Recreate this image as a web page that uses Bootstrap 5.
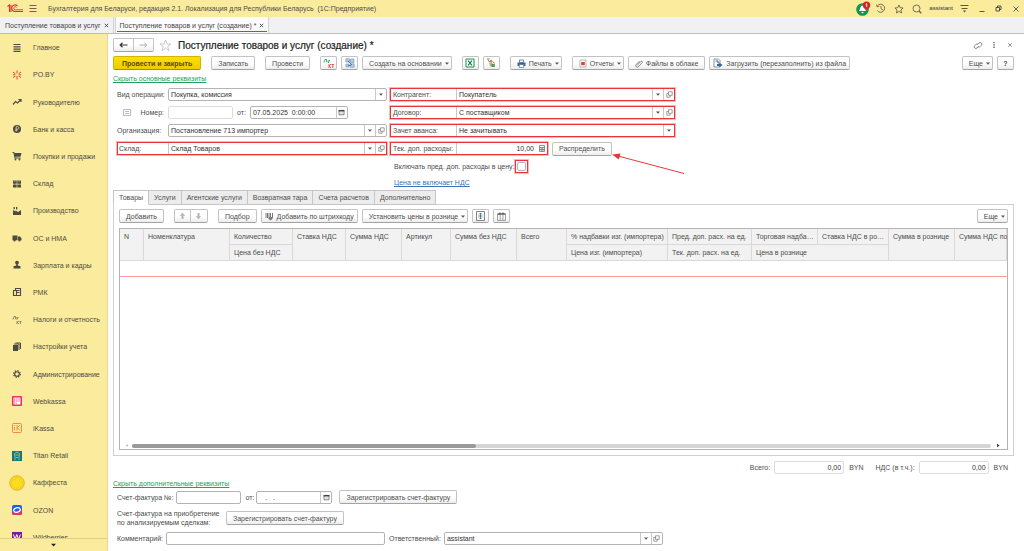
<!DOCTYPE html>
<html lang="ru">
<head>
<meta charset="utf-8">
<meta name="viewport" content="width=device-width, initial-scale=1">
<title>Поступление товаров и услуг (создание) *</title>
<link rel="stylesheet" href="https://cdn.jsdelivr.net/npm/bootstrap@5.3.0/dist/css/bootstrap.min.css">
<style>
:root{--line:#b4b4b4;--soft:#dcdcdc;--yellow:#faeb9d;--mark:#e9353a}
body{font-family:"Liberation Sans",Arial,sans-serif;font-size:7px;line-height:9px;color:#4c4c4c;background:#fff}
svg{display:block;flex:none}
button,input,select{font:inherit;color:inherit}
button{padding:0;border:0;background:none}
.app-bar{height:17px;background:var(--yellow);padding:0 4px 0 7px}
.g7{margin-left:7px}
.g10{margin-left:10px}
.app-tabs{height:17px;background:#f1f1f1;border-bottom:1px solid #bdbdbd}
.app-tab{padding:0 4px 0 5px;border-right:1px solid #d2d2d2;gap:3px;color:#444}
.app-tab a,.side a{color:inherit;text-decoration:none}
.app-tab.current{background:#fbfbfb;position:relative;border-left:1px solid #d2d2d2;margin-left:1px;padding-left:4px}
.app-tab.current::after{content:"";position:absolute;left:1px;right:1px;bottom:1px;height:1px;background:#0b9a4c}
.user{font-size:6px;color:#333}
.side{width:108px;background:var(--yellow);border-right:1px solid #e5d88f;color:#4f4b3e}
.side-list{display:grid;grid-auto-rows:5.4%;overflow:hidden;min-height:0}
.side-list a{display:flex;align-items:center}
.side-list svg{margin:0 8px 0 9px}
.side-more{height:13px;border-top:1px solid #ddd08a}
.work{padding:4px 10px 6px 5px}
.doc-title{font-size:10px;line-height:13px;font-weight:400;color:#222;margin:0 0 0 6px;-webkit-text-stroke:.2px #222}
.doc-star{margin-left:5px}
.cmd{height:14px;border:1px solid #c3c3c3;border-bottom-color:#a3a3a3;border-radius:2px;background:linear-gradient(#fff 50%,#ededed);display:inline-flex;align-items:center;justify-content:center;gap:3px;padding:0 6px;white-space:nowrap;flex:none}
.cmd-main{background:linear-gradient(#fce000,#efcb00);border-color:#d3b400;border-bottom-color:#a89000;font-weight:700;color:#564b10;padding:0 8px}
.cmd-drop{padding-right:2px}
.cmd-pic{padding:0 3px}
.w-ico{width:17px;padding:0}
.fold{color:#1fa05c;text-decoration:underline}
.fold-top{margin:4px 0 5px}
.box{height:13px;border:1px solid var(--line);border-radius:2px;background:#fff;min-width:0}
.box.pale{border-color:var(--soft)}
.box input,.box select{border:0;padding:0 2px;background:none;min-width:0;width:100%;outline:0;appearance:none;color:#333}
.box button,.box .drop{width:11px;flex:none;border-left:1px solid #c9c9c9;display:flex;align-items:center;justify-content:center}
.marked{border:1px solid var(--mark);box-shadow:0 0 0 1px rgba(233,53,58,.35);height:13px}
.marked .box{border:0;border-left:1px solid #c9c9c9;border-radius:0;height:auto;align-self:stretch}
.form-top{gap:3px}
.col-l{width:274px;gap:5px}
.col-r{width:285px;gap:5px}
.lab-l{width:55px;flex:none;padding-left:4px;white-space:nowrap}
.lab-r{width:65px;flex:none;padding-left:2px;white-space:nowrap}
.marked-l{margin-left:4px}
.marked-l .lab-l{padding-left:1px;width:50px}
.frow{height:13px}
.num-lab{width:37px}
.num-box{width:65px}
.date-box{width:98px}
.date-box input,.sfd-box input{white-space:pre}
.cost{width:158px}
.tick-mark{width:13px;padding:1px}
.tick{appearance:none;width:9px;height:9px;border:1px solid #b4b4b4;border-radius:2px;margin:0;display:block}
.price-link{color:#3b73b3}
.pointer{position:absolute;left:218px;top:63px}
.book{margin-top:3px}
.book-tabs button{height:15px;padding:0 5px;border:1px solid #c6c6c6;border-left-width:0;background:#ececec}
.book-tabs button:first-child{border-left-width:1px}
.book-tabs .on{background:#fff;border-bottom-color:#fff}
.pane{border:1px solid #d0d0d0;margin-top:-1px;padding:4px 5px 5px;min-height:0}
.sheet{border:1px solid var(--line);margin-top:5px;min-height:0;overflow:hidden}
.sheet table{table-layout:fixed;width:100%;border-collapse:separate;border-spacing:0}
.sheet th{font-weight:400;background:#f2f2f2;border-right:1px solid #d9d9d9;border-bottom:1px solid #d9d9d9;padding:3px 0 3px 4px;height:16px;vertical-align:top;white-space:nowrap}
.sheet td{height:16px;padding:0;border-bottom:1px solid #ff9d9d}
.track{height:4px;background:#d6d6d6;border-radius:2px}
.thumb{width:40%;height:4px;background:#999;border-radius:2px}
.total{width:70px}
.total input{text-align:right}
.totals{margin:5px 0}
.cur{margin-left:5px}
.cur.last{margin-right:6px}
.vat{margin-left:12px}
.foot{padding-left:4px;gap:5px;margin-top:2px}
.sf-lab{padding-right:2px}
.sf-box{width:65px}
.sfd-lab{padding:0 2px 0 5px}
.sfd-box{width:76px}
.two{width:109px}
.cm-lab{width:49px}
.cm-box{width:219px}
.rs-lab{padding:0 3px 0 4px}
.rs-box{width:219px}
</style>
</head>
<body class="vh-100 d-flex flex-column overflow-hidden">
<svg width="0" height="0" class="position-absolute">
 <symbol id="caret" viewBox="0 0 4 3"><path d="M0 .5h4L2 2.7z" fill="#555"/></symbol>
 <symbol id="open" viewBox="0 0 7 7"><path d="M2.5.8h3.700v3.500H2.500zM2.500 2.500H.8v3.700h3.400V4.300" fill="none" stroke="#777" stroke-width=".7"/></symbol>
 <symbol id="cal" viewBox="0 0 7 7"><path d="M1 1.400h5v4.400H1z" fill="#fff" stroke="#666" stroke-width=".8"/><path d="M.6 1h5.800v1.500H.6z" fill="#444"/><path d="M2 4h3" stroke="#999" stroke-width=".6"/></symbol>
 <symbol id="close" viewBox="0 0 6 6"><path d="M1 1l4 4M5 1L1 5" stroke="#444" stroke-width="1.100"/></symbol>
</svg>

<header class="app-bar d-flex align-items-center">
 <svg width="17" height="9" viewBox="0 0 17 9" fill="none" stroke="#d9352b" stroke-width="1.100"><path d="M.5 2.500L2.500 1v7M4 1v7"/><path d="M10.500 2A3.300 3.300 0 1 0 8.500 7.500H16"/><path d="M9.500 3.500A1.500 1.500 0 1 0 8.500 5.800H16" stroke-width=".9"/></svg>
 <button class="ms-1" aria-label="Меню"><svg width="10" height="9" viewBox="0 0 10 9"><path d="M1.500 1.500h7M1.500 4.500h7M1.500 7.500h7" stroke="#6d6646"/></svg></button>
 <span class="g10 text-nowrap">Бухгалтерия для Беларуси, редакция 2.1. Локализация для Республики Беларусь&nbsp; (1С:Предприятие)</span>
 <div class="ms-auto d-flex align-items-center">
  <button aria-label="Уведомления"><svg width="16" height="16" viewBox="0 0 16 16"><circle cx="7.500" cy="8.500" r="6.300" fill="#0f9650"/><path d="M7.500 4.500c2 0 2 3 3.500 5.500H4c1.500-2.500 1.500-5.500 3.500-5.500zM6 11h3l-1.500 1.500z" fill="#fff"/><circle cx="11.500" cy="4.300" r="3.700" fill="#e0221e"/><path d="M10.700 3.300l1-.8v3.500" stroke="#fff" stroke-width=".9" fill="none"/></svg></button>
  <button class="ms-1" aria-label="История"><svg width="12" height="11" viewBox="0 0 12 11" fill="none" stroke="#6a6347" stroke-width=".9"><path d="M2.300 3A4 4 0 1 1 2.300 7.500M1.500 1.500l.6 2.200 2.200-.4M6 3v2.700L8 7"/></svg></button>
  <button class="g7" aria-label="Избранное"><svg width="10" height="10" viewBox="0 0 10 10"><path d="M5 1l1.200 2.700 2.900.3-2.200 2 .7 3L5 7.400 2.400 9l.7-3L.9 4l2.900-.3z" fill="none" stroke="#6a6347" stroke-width=".9"/></svg></button>
  <button class="ms-2" aria-label="Поиск"><svg width="10" height="10" viewBox="0 0 10 10" fill="none" stroke="#6a6347"><circle cx="4.500" cy="4.500" r="3.500" stroke-width=".9"/><path d="M7 7l2.300 2.300" stroke-width="1.300"/></svg></button>
  <span class="g7 user">assistant</span>
  <button class="g7" aria-label="Настройки"><svg width="9" height="9" viewBox="0 0 9 9"><path d="M.5 1.500h8M1.500 4.500h6" stroke="#5d573f"/><path d="M2.800 6.500h3.400L4.500 8.500z" fill="#5d573f"/></svg></button>
  <button class="g10" aria-label="Свернуть"><svg width="6" height="8" viewBox="0 0 6 8"><path d="M.5 6.500h5" stroke="#555"/></svg></button>
  <button class="g10" aria-label="Развернуть"><svg width="7" height="7" viewBox="0 0 7 7" fill="none" stroke="#444" stroke-width=".9"><path d="M1 2.500h3.500V6H1zM2.500 2.500V1H6v3.500H4.500"/></svg></button>
  <button class="g10" aria-label="Закрыть"><svg width="8" height="8" viewBox="0 0 8 8"><path d="M1.500 1.500l5 5M6.500 1.500l-5 5" stroke="#555" stroke-width=".9"/></svg></button>
 </div>
</header>

<nav class="app-tabs d-flex">
 <div class="app-tab d-flex align-items-center"><a href="#">Поступление товаров и услуг</a><button aria-label="Закрыть вкладку"><svg width="5" height="5"><use href="#close"/></svg></button></div>
 <div class="app-tab current d-flex align-items-center"><a href="#">Поступление товаров и услуг (создание) *</a><button aria-label="Закрыть вкладку"><svg width="5" height="5"><use href="#close"/></svg></button></div>
</nav>

<div class="d-flex flex-grow-1 overflow-hidden">
<aside class="side d-flex flex-column flex-shrink-0">
 <nav class="side-list flex-grow-1">
  <a href="#"><svg width="16" height="16" viewBox="0 0 16 16"><path d="M4.500 4.500h7M4.500 6.800h7M4.500 9.100h7M4.500 11.400h7" stroke="#4b4a45" stroke-width="1.200"/></svg>Главное</a>
  <a href="#"><svg width="16" height="16" viewBox="0 0 16 16"><path d="M8 3.500v3M8 9v3.500M4 5l2.500 2M12 5L9.500 7M4 10.500l2.500-1.500M12 10.500L9.500 9M4 7.800h2M10 7.800h2" stroke="#ee4136"/></svg>PO.BY</a>
  <a href="#"><svg width="16" height="16" viewBox="0 0 16 16"><path d="M4 10.500L6.500 7.500l2 1.500L12 5.500M9.500 5.500h2.500V8" fill="none" stroke="#4b4a45" stroke-width="1.200"/></svg>Руководителю</a>
  <a href="#"><svg width="16" height="16" viewBox="0 0 16 16"><circle cx="8" cy="8" r="4" fill="#4b4a45"/><path d="M7.200 10.500v-5h1.300a1.300 1.300 0 0 1 0 2.700H6.300M6.300 9.300h2.200" fill="none" stroke="#f5e79c" stroke-width=".7"/></svg>Банк и касса</a>
  <a href="#"><svg width="16" height="16" viewBox="0 0 16 16"><path d="M3.500 4H5.200l.3 1H12.500l-1 3.700H6.200l.2.800H11.500v.9H5.500L4.500 4.900h-1z" fill="#4b4a45"/><circle cx="6.500" cy="11.500" r=".9" fill="#4b4a45"/><circle cx="10.500" cy="11.500" r=".9" fill="#4b4a45"/></svg>Покупки и продажи</a>
  <a href="#"><svg width="16" height="16" viewBox="0 0 16 16"><path d="M4 4.500h3.700v3.300H4zM8.300 4.500H12v3.300H8.300zM4 8.400h3.700v3.100H4zM8.300 8.400H12v3.100H8.300z" fill="#4b4a45"/><path d="M5.800 4.500v1.500M10.200 4.500v1.500" stroke="#f5e79c" stroke-width=".6"/></svg>Склад</a>
  <a href="#"><svg width="16" height="16" viewBox="0 0 16 16"><path d="M4 12V7l2.500 1.500V7.500L9 9l3-2v5zM4.500 4h1.300v2.300H4.500zM7 4h1.300v2.500H7z" fill="#4b4a45"/></svg>Производство</a>
  <a href="#"><svg width="16" height="16" viewBox="0 0 16 16"><path d="M3.500 5.500h5v4.700h-5zM9 6.500h2l1.500 1.800v1.900H9z" fill="#4b4a45"/><circle cx="5.500" cy="10.500" r="1.100" fill="#4b4a45"/><circle cx="10.500" cy="10.500" r="1.100" fill="#4b4a45"/></svg>ОС и НМА</a>
  <a href="#"><svg width="16" height="16" viewBox="0 0 16 16"><circle cx="8" cy="5.600" r="1.900" fill="#4b4a45"/><path d="M7.200 7h1.600v1.500l2.700.8V11.500h-7V9.300l2.700-.8z" fill="#4b4a45"/></svg>Зарплата и кадры</a>
  <a href="#"><svg width="16" height="16" viewBox="0 0 16 16"><path d="M4.500 6.500h3v5h-3zM6.500 6V4.500h5v7H8" fill="none" stroke="#4b4a45" stroke-width="1.100"/><path d="M8 6.500h2.500M8 8.500h2.500" stroke="#4b4a45"/></svg>РМК</a>
  <a href="#"><svg width="16" height="16" viewBox="0 0 16 16" fill="none" stroke="#77715a" stroke-width=".8"><path d="M4 7.500V6.500h.5L5 4.500h1.500v2h.6v1M7.500 5l1 1.300L9.500 5M8.800 6L8 7.500M8 9v3M10 9L8.300 10.400 10 12M10.500 9.500h2M11.500 9.500V12"/></svg>Налоги и отчетность</a>
  <a href="#"><svg width="16" height="16" viewBox="0 0 16 16"><path d="M4 6h5v6H4z" fill="#4b4a45"/><path d="M5 5h5v6M6.500 4h5v6" fill="none" stroke="#4b4a45"/></svg>Настройки учета</a>
  <a href="#"><svg width="16" height="16" viewBox="0 0 16 16" fill="none" stroke="#4b4a45"><circle cx="8" cy="8" r="2.300" stroke-width="1.100"/><circle cx="8" cy="8" r="3.300" stroke-dasharray="1.300 1.290" stroke-width="1.300"/></svg>Администрирование</a>
  <a href="#"><svg width="16" height="16" viewBox="0 0 16 16"><rect x="3" y="3" width="10" height="10" rx="1" fill="#ee2a63"/><path d="M4.500 4.500h7v7h-7z" fill="#fff"/><path d="M5 6h6M5 8h6M5 10h3" stroke="#ee2a63" stroke-width=".8" stroke-dasharray="1.200 .5"/></svg>Webkassa</a>
  <a href="#"><svg width="16" height="16" viewBox="0 0 16 16" fill="none" stroke="#f58a3c"><rect x="3.500" y="3.500" width="9" height="9" rx="1"/><path d="M5.500 7v3.500M5.500 5v1M8 5v5.500M11 5L8.300 7.700 11 10.500" stroke-width=".9"/></svg>iKassa</a>
  <a href="#"><svg width="16" height="16" viewBox="0 0 16 16"><path d="M3 3h10v10H3z" fill="#17786f"/><path d="M6 12V9.500L5.500 5.500 8 4l2.500 1.500L10 9.500V12M6.500 7h3M7 9.500h2" fill="none" stroke="#a9d3ce" stroke-width=".8"/></svg>Titan Retail</a>
  <a href="#"><svg width="16" height="16" viewBox="0 0 16 16"><circle cx="8" cy="8" r="7.300" fill="#fbdc1e" stroke="#d9ab2a" stroke-width=".8"/><circle cx="8" cy="8" r="5.300" fill="none" stroke="#dfb01e" stroke-width=".7" stroke-dasharray="1 1"/></svg>Каффеста</a>
  <a href="#"><svg width="16" height="16" viewBox="0 0 16 16"><rect x="3" y="3" width="10" height="10" rx="2" fill="#1561f0"/><path d="M3 10.500l10-3V11a2 2 0 0 1-2 2H5a2 2 0 0 1-2-2z" fill="#f2296b"/><ellipse cx="8" cy="8" rx="3.300" ry="2.200" fill="none" stroke="#fff" stroke-width="1.300" transform="rotate(-15 8 8)"/></svg>OZON</a>
  <a href="#"><svg width="16" height="16" viewBox="0 0 16 16"><path d="M3 3h10v10H3z" fill="#7c1c8e"/><path d="M4.500 5.500l1.500 5 1.800-5 1.800 5 1.800-5" fill="none" stroke="#fff"/></svg>Wildberries</a>
 </nav>
 <button class="side-more d-flex align-items-center justify-content-center" aria-label="Ещё разделы"><svg width="5" height="4" viewBox="0 0 4 3"><path d="M0 .5h4L2 2.700z" fill="#222"/></svg></button>
</aside>

<main class="work flex-grow-1 d-flex flex-column overflow-hidden">
 <div class="d-flex align-items-center">
  <div class="d-flex">
   <button class="cmd rounded-end-0 px-1" aria-label="Назад"><svg width="11" height="8" viewBox="0 0 11 8"><path d="M9.500 4H2.500M4.500 1.800L2.200 4l2.300 2.200" fill="none" stroke="#333" stroke-width="1.200"/></svg></button>
   <button class="cmd rounded-start-0 border-start-0 px-1" aria-label="Вперёд"><svg width="11" height="8" viewBox="0 0 11 8"><path d="M1.500 4h7M6.500 1.800L8.800 4 6.500 6.200" fill="none" stroke="#aaa"/></svg></button>
  </div>
  <button class="doc-star" aria-label="В избранное"><svg width="13" height="13" viewBox="0 0 13 13"><path d="M6.500 1l1.500 4h4L8.800 7.500 10 11.700 6.500 9.200 3 11.700l1.200-4.200L1 5h4z" fill="none" stroke="#b5b5b5" stroke-width=".7"/></svg></button>
  <h1 class="doc-title">Поступление товаров и услуг (создание) *</h1>
  <div class="ms-auto d-flex align-items-center">
   <button aria-label="Ссылка"><svg width="10" height="9" viewBox="0 0 10 9" fill="none" stroke="#777" stroke-width=".9"><path d="M4.300 3.700L6 2a1.600 1.600 0 0 1 2.300 2.300L6.800 5.800a1.500 1.500 0 0 1-1.500.3M5.700 5.200L4 7A1.600 1.600 0 0 1 1.700 4.700L3.200 3.200A1.500 1.500 0 0 1 4.700 3"/></svg></button>
   <button class="ms-2" aria-label="Действия"><svg width="6" height="8" viewBox="0 0 6 8"><path d="M3 1v6" stroke="#555" stroke-width="1.300" stroke-dasharray="1.300 1"/></svg></button>
   <button class="g10" aria-label="Закрыть"><svg width="7" height="6" viewBox="0 0 7 6"><path d="M1.200 1.200l3.600 3.600M4.800 1.200L1.200 4.800" stroke="#777" stroke-width=".8"/></svg></button>
  </div>
 </div>

 <div class="d-flex align-items-center mt-1">
  <button class="cmd cmd-main">Провести и закрыть</button>
  <button class="cmd g10">Записать</button>
  <button class="cmd g10">Провести</button>
  <button class="cmd w-ico g10" aria-label="Проводки"><svg width="12" height="11" viewBox="0 0 12 11" fill="none"><path d="M1 4.500v-1h.5L2 1.500h1.500v2h.6v1M5 2l.8 1.300L6.800 2M6 3.300L5.300 5" stroke="#2ca568" stroke-width=".9"/><path d="M6 6v4M8 6L6.300 8 8 10M8.500 6.500H11M9.800 6.500V10" stroke="#e8484a" stroke-width=".9"/></svg></button>
  <button class="cmd w-ico ms-1" aria-label="Структура"><svg width="10" height="10" viewBox="0 0 10 10"><path d="M.8.800h3.700v3.200H.8zM5.500 1H9v3.500H5.500zM1 6h3v3H1zM5.300 5.800H9.200V9.300H5.300z" fill="#b9cce4" stroke="#6c8dbb" stroke-width=".6"/><path d="M3 3l4 4M3 7.500h3" stroke="#3f5f95" fill="none" stroke-width=".8"/></svg></button>
  <button class="cmd cmd-drop ms-1">Создать на основании <svg width="4" height="3"><use href="#caret"/></svg></button>
  <button class="cmd w-ico g10" aria-label="Excel"><svg width="10" height="10" viewBox="0 0 10 10"><path d="M1 1h8v8H1z" fill="#fff" stroke="#1d8a50"/><path d="M3 2.700l4 4.600M7 2.700L3 7.300" stroke="#1d7a48" stroke-width="1.200"/></svg></button>
  <button class="cmd w-ico ms-1" aria-label="Контакты"><svg width="10" height="10" viewBox="0 0 10 10"><path d="M1 1h2.500M2 2.500L4 4" stroke="#5b5b5b" stroke-width=".9"/><circle cx="5" cy="3.300" r="1.500" fill="#c98a52"/><path d="M3 5h3.500l1 3.500H4z" fill="#d9b25c"/><path d="M5.500 6H8.800v3H5.500z" fill="#4f9a6b"/><path d="M7.500 4l.8 1.500" stroke="#d2453c"/></svg></button>
  <button class="cmd cmd-drop g10"><svg width="9" height="9" viewBox="0 0 9 9"><path d="M2.500 1h4v2.500h-4z" fill="#fff" stroke="#4a6f9c" stroke-width=".8"/><path d="M.5 3.500h8v3.500h-8z" fill="#3d6797"/><path d="M2.300 5.500h4.400v3H2.300z" fill="#fff" stroke="#4a6f9c" stroke-width=".7"/></svg>Печать <svg width="4" height="3"><use href="#caret"/></svg></button>
  <button class="cmd cmd-drop g10"><svg width="8" height="9" viewBox="0 0 8 9"><path d="M1 1h6v7H1z" fill="#fff" stroke="#999" stroke-width=".7"/><path d="M2.200 3h3.600v3.200H2.200z" fill="#d0443c"/></svg>Отчеты <svg width="4" height="3"><use href="#caret"/></svg></button>
  <button class="cmd ms-1"><svg width="8" height="9" viewBox="0 0 8 9"><path d="M2 6.500l3.700-4A.9.9 0 0 1 7 3.800L3.500 7.700A1.500 1.500 0 0 1 1.200 5.500L4.500 2" fill="none" stroke="#777" stroke-width=".9"/></svg>Файлы в облаке</button>
  <button class="cmd cmd-pic ms-1"><svg width="10" height="10" viewBox="0 0 10 10"><path d="M1 1h4.500l1.500 1.500V9H1z" fill="#fff" stroke="#778" stroke-width=".8"/><path d="M2.500 3h2.500v2h1.500" fill="none" stroke="#2d67a5"/><path d="M4 6h2.500V4.800L9.500 7 6.500 9.300V8H4z" fill="#2d67a5"/></svg>Загрузить (перезаполнить) из файла</button>
  <button class="cmd cmd-drop ms-auto">Еще <svg width="4" height="3"><use href="#caret"/></svg></button>
  <button class="cmd w-ico fw-bold ms-1">?</button>
 </div>

 <div class="fold-top"><a class="fold" href="#">Скрыть основные реквизиты</a></div>

 <section class="form-top d-flex">
  <div class="col-l d-flex flex-column">
   <div class="frow d-flex align-items-center"><label class="lab-l" for="op">Вид операции:</label><div class="box d-flex flex-grow-1"><select id="op"><option>Покупка, комиссия</option></select><span class="drop"><svg width="4" height="3"><use href="#caret"/></svg></span></div></div>
   <div class="frow d-flex align-items-center">
    <svg class="g10" width="8" height="7" viewBox="0 0 8 7"><path d="M.5.500h7v6h-7zM2 2.500h4M2 4.500h4" fill="none" stroke="#a9a9a9" stroke-width=".8"/></svg>
    <label for="num" class="text-end flex-shrink-0 pe-1 num-lab">Номер:</label>
    <div class="box pale d-flex num-box"><input id="num"></div>
    <label for="dt" class="ms-1 me-1">от:</label>
    <div class="box d-flex date-box"><input id="dt" value="07.05.2025  0:00:00"><button aria-label="Календарь"><svg width="7" height="7"><use href="#cal"/></svg></button></div>
   </div>
   <div class="frow d-flex align-items-center"><label class="lab-l" for="org">Организация:</label><div class="box d-flex flex-grow-1"><input id="org" value="Постановление 713 импортер"><button aria-label="Выбрать"><svg width="4" height="3"><use href="#caret"/></svg></button><button aria-label="Открыть"><svg width="7" height="7"><use href="#open"/></svg></button></div></div>
   <div class="marked marked-l d-flex align-items-center"><label class="lab-l" for="wh">Склад:</label><div class="box d-flex flex-grow-1"><input id="wh" value="Склад Товаров"><button aria-label="Выбрать"><svg width="4" height="3"><use href="#caret"/></svg></button><button aria-label="Открыть"><svg width="7" height="7"><use href="#open"/></svg></button></div></div>
  </div>
  <div class="col-r d-flex flex-column position-relative">
   <div class="marked d-flex align-items-center"><label class="lab-r" for="ka">Контрагент:</label><div class="box d-flex flex-grow-1"><input id="ka" value="Покупатель"><button aria-label="Выбрать"><svg width="4" height="3"><use href="#caret"/></svg></button><button aria-label="Открыть"><svg width="7" height="7"><use href="#open"/></svg></button></div></div>
   <div class="marked d-flex align-items-center"><label class="lab-r" for="dg">Договор:</label><div class="box d-flex flex-grow-1"><input id="dg" value="С поставщиком"><button aria-label="Выбрать"><svg width="4" height="3"><use href="#caret"/></svg></button><button aria-label="Открыть"><svg width="7" height="7"><use href="#open"/></svg></button></div></div>
   <div class="marked d-flex align-items-center"><label class="lab-r" for="av">Зачет аванса:</label><div class="box d-flex flex-grow-1"><select id="av"><option>Не зачитывать</option></select><span class="drop"><svg width="4" height="3"><use href="#caret"/></svg></span></div></div>
   <div class="frow d-flex align-items-center">
    <div class="marked d-flex align-items-center cost"><label class="lab-r" for="cost">Тек. доп. расходы:</label><div class="box d-flex flex-grow-1"><input id="cost" class="text-end" value="10,00"><button class="border-0" aria-label="Калькулятор"><svg width="6" height="7" viewBox="0 0 6 7"><path d="M.5.500h5v6h-5zM.5 2.500h5M2.200 2.500v4M3.900 2.500v4M.5 4.500h5" fill="none" stroke="#666" stroke-width=".7"/></svg></button></div></div>
    <button class="cmd ms-1">Распределить</button>
   </div>
   <div class="frow d-flex align-items-center"><label for="incl" class="lab-incl ps-1">Включать пред. доп. расходы в цену:</label><span class="marked tick-mark"><input class="tick" type="checkbox" id="incl"></span></div>
   <div class="ps-1"><a href="#" class="price-link">Цена не включает НДС</a></div>
   <svg class="pointer" width="78" height="26" viewBox="0 0 78 26"><path d="M76 22.500L10 5" stroke="#e5383c" fill="none"/><path d="M4 3.500l8.500-1-1.700 6z" fill="#e5383c"/></svg>
  </div>
 </section>

 <section class="book flex-grow-1 d-flex flex-column">
  <div class="book-tabs d-flex position-relative">
   <button class="on">Товары</button><button>Услуги</button><button>Агентские услуги</button><button>Возвратная тара</button><button>Счета расчетов</button><button>Дополнительно</button>
  </div>
  <div class="pane flex-grow-1 d-flex flex-column">
   <div class="d-flex">
    <button class="cmd">Добавить</button>
    <button class="cmd w-ico rounded-end-0 g10" aria-label="Вверх"><svg width="7" height="8" viewBox="0 0 7 8"><path d="M3.500.800l2.700 3H4.500V7h-2V3.800H.8z" fill="#b0b6ba"/></svg></button>
    <button class="cmd w-ico rounded-start-0 border-start-0" aria-label="Вниз"><svg width="7" height="8" viewBox="0 0 7 8"><path d="M3.500 7.200l2.700-3H4.500V1h-2v3.200H.8z" fill="#b0b6ba"/></svg></button>
    <button class="cmd g10">Подбор</button>
    <button class="cmd cmd-pic ms-1"><svg width="9" height="9" viewBox="0 0 9 9"><path d="M1 1v5M2.500 1v5M4 1v4M5.500 1v4M7.500 1v5" stroke="#555" stroke-width=".8"/><path d="M3.500 5h4v2l-2 1.500-2-1.500z" fill="#877"/></svg>Добавить по штрихкоду</button>
    <button class="cmd cmd-drop ms-1">Установить цены в рознице <svg width="4" height="3"><use href="#caret"/></svg></button>
    <button class="cmd w-ico ms-1" aria-label="Высота строк"><svg width="9" height="10" viewBox="0 0 9 10"><path d="M.5.500h8v9h-8z" fill="#fff" stroke="#666" stroke-width=".8"/><path d="M4.500 2v6M3 3.500L4.500 2 6 3.500M3 6.500L4.500 8 6 6.500M2.500 5h4" fill="none" stroke="#356" stroke-width=".7"/></svg></button>
    <button class="cmd w-ico ms-1" aria-label="Настройка колонок"><svg width="9" height="9" viewBox="0 0 9 9"><path d="M.5 2h8v6.500h-8zM3.200 3v5M5.900 3v5" fill="none" stroke="#8a8a8a" stroke-width=".8"/><path d="M.5 2h8M3 .500v2M6 .500v2" stroke="#444"/></svg></button>
    <button class="cmd cmd-drop ms-auto">Еще <svg width="4" height="3"><use href="#caret"/></svg></button>
   </div>
   <div class="sheet flex-grow-1 d-flex flex-column">
    <table>
     <colgroup><col style="width:24px"><col style="width:86px"><col style="width:63px"><col style="width:53px"><col style="width:56px"><col style="width:49px"><col style="width:66px"><col style="width:50px"><col style="width:101px"><col style="width:84px"><col style="width:66px"><col style="width:71px"><col style="width:66px"><col></colgroup>
     <thead>
      <tr><th rowspan="2">N</th><th rowspan="2">Номенклатура</th><th>Количество</th><th rowspan="2">Ставка НДС</th><th rowspan="2">Сумма НДС</th><th rowspan="2">Артикул</th><th rowspan="2">Сумма без НДС</th><th rowspan="2">Всего</th><th>% надбавки изг. (импортера)</th><th>Пред. доп. расх. на ед.</th><th>Торговая надба…</th><th>Ставка НДС в ро…</th><th rowspan="2">Сумма в рознице</th><th rowspan="2">Сумма НДС по</th></tr>
      <tr><th>Цена без НДС</th><th>Цена изг. (импортера)</th><th>Тек. доп. расх. на ед.</th><th colspan="2">Цена в рознице</th></tr>
     </thead>
     <tbody><tr><td colspan="14"></td></tr></tbody>
    </table>
    <div class="mt-auto d-flex align-items-center px-1 scroll-row">
     <svg width="8" height="5" viewBox="0 0 8 5"><path d="M3.500 1v3L2 2.500z" fill="#999"/></svg>
     <div class="track flex-grow-1"><div class="thumb"></div></div>
     <svg width="12" height="7" viewBox="0 0 12 7"><path d="M6 1.500v4l2.500-2z" fill="#444"/></svg>
    </div>
   </div>
  </div>
 </section>

 <div class="totals d-flex align-items-center justify-content-end">
  <label for="t1" class="me-1">Всего:</label><div class="box pale total d-flex"><input id="t1" value="0,00" readonly></div><span class="cur">BYN</span>
  <label for="t2" class="me-1 vat">НДС (в т.ч.):</label><div class="box pale total d-flex"><input id="t2" value="0,00" readonly></div><span class="cur last">BYN</span>
 </div>
 <div><a class="fold" href="#">Скрыть дополнительные реквизиты</a></div>
 <div class="foot d-flex flex-column">
  <div class="d-flex align-items-center"><label for="sf" class="sf-lab">Счет-фактура №:</label><div class="box d-flex sf-box"><input id="sf"></div><label for="sfd" class="sfd-lab">от:</label><div class="box d-flex sfd-box"><input id="sfd" value="   .   ."><button aria-label="Календарь"><svg width="7" height="7"><use href="#cal"/></svg></button></div><button class="cmd g7">Зарегистрировать счет-фактуру</button></div>
  <div class="d-flex align-items-center"><span class="two">Счет-фактура на приобретение<br>по анализируемым сделкам:</span><button class="cmd">Зарегистрировать счет-фактуру</button></div>
  <div class="d-flex align-items-center"><label for="cm" class="cm-lab">Комментарий:</label><div class="box d-flex cm-box"><input id="cm"></div><label for="rs" class="rs-lab">Ответственный:</label><div class="box d-flex rs-box"><input id="rs" value="assistant"><button aria-label="Выбрать"><svg width="4" height="3"><use href="#caret"/></svg></button><button aria-label="Открыть"><svg width="7" height="7"><use href="#open"/></svg></button></div></div>
 </div>
</main>
</div>
<script src="https://cdn.jsdelivr.net/npm/bootstrap@5.3.0/dist/js/bootstrap.bundle.min.js"></script>
</body>
</html>
